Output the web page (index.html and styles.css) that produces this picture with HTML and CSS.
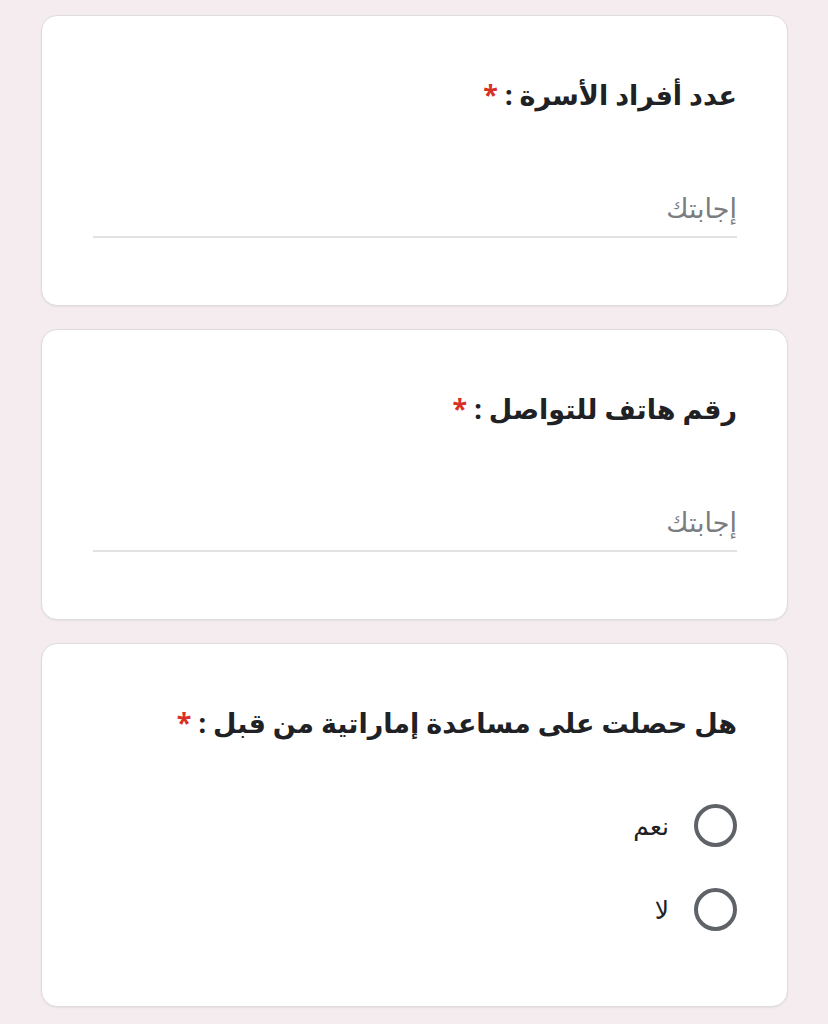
FILE: index.html
```html
<!DOCTYPE html>
<html lang="ar" dir="rtl">
<head>
    <meta charset="UTF-8">
    <meta name="viewport" content="width=device-width, initial-scale=1.0">
    <title>استمارة</title>
    <link rel="stylesheet" href="styles.css">
</head>
<body>

    <div class="wrap">

        <div class="card">
            <div class="q_title">عدد أفراد الأسرة : <span class="req">*</span></div>
            <div class="answer">
                <input type="text" class="answer_input" placeholder="إجابتك">
            </div>
        </div>

        <div class="card">
            <div class="q_title">رقم هاتف للتواصل : <span class="req">*</span></div>
            <div class="answer">
                <input type="text" class="answer_input" placeholder="إجابتك">
            </div>
        </div>

        <div class="card card_radio">
            <div class="q_title">هل حصلت على مساعدة إماراتية من قبل : <span class="req">*</span></div>
            <div class="options">
                <label class="option">
                    <span class="radio"></span>
                    <span class="opt_text">نعم</span>
                </label>
                <label class="option">
                    <span class="radio"></span>
                    <span class="opt_text">لا</span>
                </label>
            </div>
        </div>

    </div>

</body>
</html>
```

FILE: styles.css
```css
*{margin:0;padding:0;box-sizing:border-box;}
html,body{background-color:#f4ecee;}
body{font-family:"Noto Sans","DejaVu Sans",sans-serif;color:#202124;}

.wrap{padding:15px 40px 20px 41px;display:flex;flex-direction:column;gap:23px;}

.card{background-color:#fff;border:1px solid #dedbdc;border-radius:16px;box-shadow:0 1px 2px rgba(0,0,0,0.06);padding:59px 50px 67px 51px;}

.q_title{font-size:27px;font-weight:bold;line-height:40px;text-align:right;}
.q_title .req{color:#d93025;}

.answer{margin-top:74px;border-bottom:2px solid #e2e2e2;padding-bottom:9px;}
.answer_input{display:block;width:100%;border:0;outline:0;background:transparent;font-family:inherit;font-size:27px;line-height:38px;height:38px;color:#202124;text-align:right;}
.answer_input::placeholder{color:#7a7d80;}

.card_radio{padding-bottom:55px;}
.options{margin-top:40px;display:flex;flex-direction:column;}
.option{display:flex;align-items:center;height:84px;gap:25px;}
.radio{width:43px;height:43px;border:4px solid #5f6368;border-radius:50%;flex-shrink:0;}
.opt_text{font-size:25px;line-height:36px;color:#202124;}
```
